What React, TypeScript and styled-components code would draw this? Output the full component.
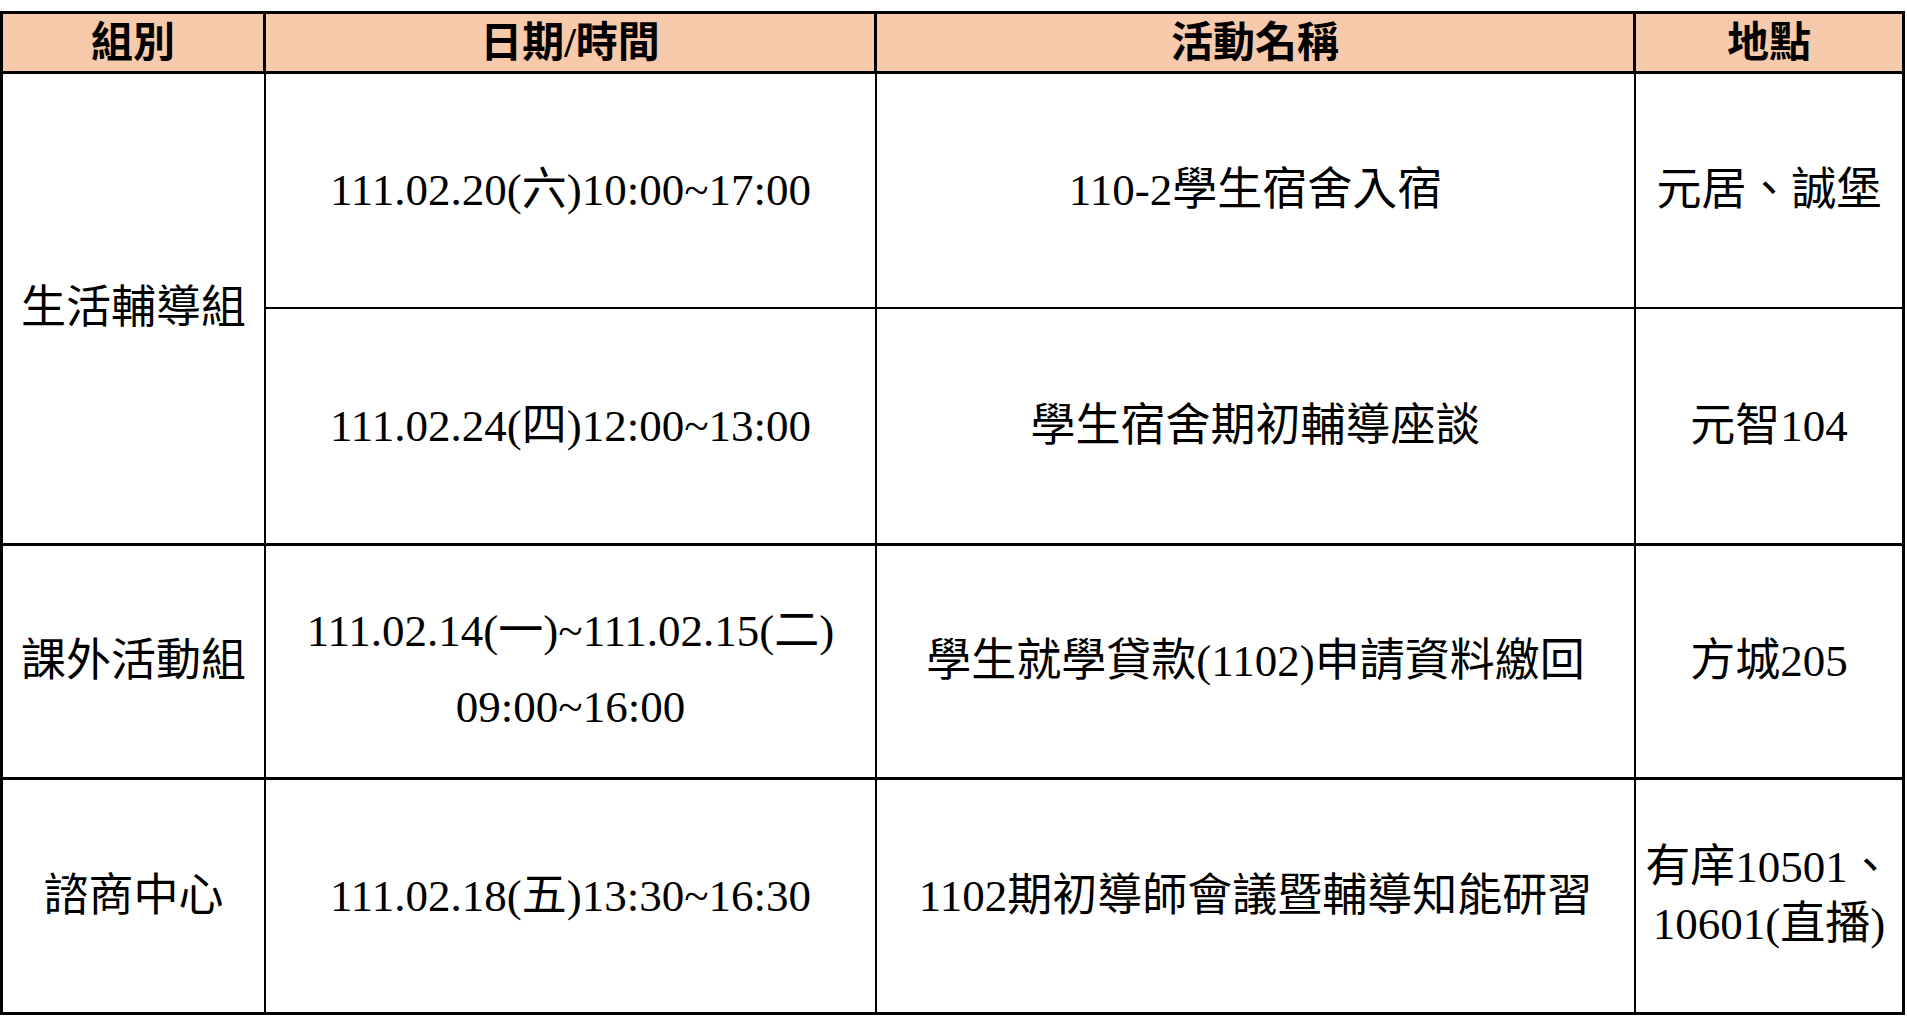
import React from "react";
import styled, { createGlobalStyle } from "styled-components";

const GlobalStyle = createGlobalStyle`
  html, body {
    margin: 0;
    padding: 0;
    background: #ffffff;
  }
  body {
    font-family: "Liberation Serif", "Noto Sans CJK TC", serif;
    color: #000000;
  }
`;

const Page = styled.div`
  padding-top: 11px;
  width: 1907px;
  height: 1019px;
  box-sizing: border-box;
  overflow: hidden;
`;

const Table = styled.div`
  display: grid;
  grid-template-columns: 263px 611px 759px 269px;
  grid-template-rows: 60px 235px 237px 234px 235px;
  width: 1905px;
  box-sizing: border-box;
  border-top: 3px solid #000;
  border-left: 3px solid #000;
`;

const Cell = styled.div<{
  $bottom: number;
  $right: number;
  $span?: number;
  $lh?: number;
  $shift?: number;
}>`
  box-sizing: border-box;
  display: flex;
  align-items: center;
  justify-content: center;
  text-align: center;
  border-bottom: ${(p) => p.$bottom}px solid #000;
  border-right: ${(p) => p.$right}px solid #000;
  grid-row: ${(p) => (p.$span ? `span ${p.$span}` : "auto")};
  font-size: 45px;
  line-height: ${(p) => p.$lh ?? 57}px;
  font-weight: 400;
  padding-top: ${(p) => p.$shift ?? 0}px;
  white-space: nowrap;
`;

const HeadCell = styled(Cell)`
  background: #f7caac;
  font-size: 42px;
  font-weight: 700;
  line-height: 50px;
`;

type Row = {
  date: React.ReactNode;
  name: string;
  place: React.ReactNode;
  dateLh?: number;
  dateShift?: number;
};

type Group = { title: string; rows: Row[] };

const groups: Group[] = [
  {
    title: "生活輔導組",
    rows: [
      { date: "111.02.20(六)10:00~17:00", name: "110-2學生宿舍入宿", place: "元居、誠堡" },
      { date: "111.02.24(四)12:00~13:00", name: "學生宿舍期初輔導座談", place: "元智104" },
    ],
  },
  {
    title: "課外活動組",
    rows: [
      {
        date: (
          <>
            111.02.14(一)~111.02.15(二)
            <br />
            09:00~16:00
          </>
        ),
        dateLh: 76,
        dateShift: 14,
        name: "學生就學貸款(1102)申請資料繳回",
        place: "方城205",
      },
    ],
  },
  {
    title: "諮商中心",
    rows: [
      {
        date: "111.02.18(五)13:30~16:30",
        name: "1102期初導師會議暨輔導知能研習",
        place: (
          <>
            有庠10501、
            <br />
            10601(直播)
          </>
        ),
      },
    ],
  },
];

export default function App() {
  return (
    <>
      <GlobalStyle />
      <Page>
        <Table>
          <HeadCell $bottom={3} $right={3}>組別</HeadCell>
          <HeadCell $bottom={3} $right={3}>日期/時間</HeadCell>
          <HeadCell $bottom={3} $right={3}>活動名稱</HeadCell>
          <HeadCell $bottom={3} $right={3}>地點</HeadCell>
          {groups.map((g) => (
            <React.Fragment key={g.title}>
              <Cell $bottom={3} $right={2} $span={g.rows.length}>
                {g.title}
              </Cell>
              {g.rows.map((r, i) => {
                const bottom = i === g.rows.length - 1 ? 3 : 2;
                return (
                  <React.Fragment key={i}>
                    <Cell $bottom={bottom} $right={2} $lh={r.dateLh} $shift={r.dateShift}>
                      {r.date}
                    </Cell>
                    <Cell $bottom={bottom} $right={2}>
                      {r.name}
                    </Cell>
                    <Cell $bottom={bottom} $right={3}>
                      {r.place}
                    </Cell>
                  </React.Fragment>
                );
              })}
            </React.Fragment>
          ))}
        </Table>
      </Page>
    </>
  );
}
